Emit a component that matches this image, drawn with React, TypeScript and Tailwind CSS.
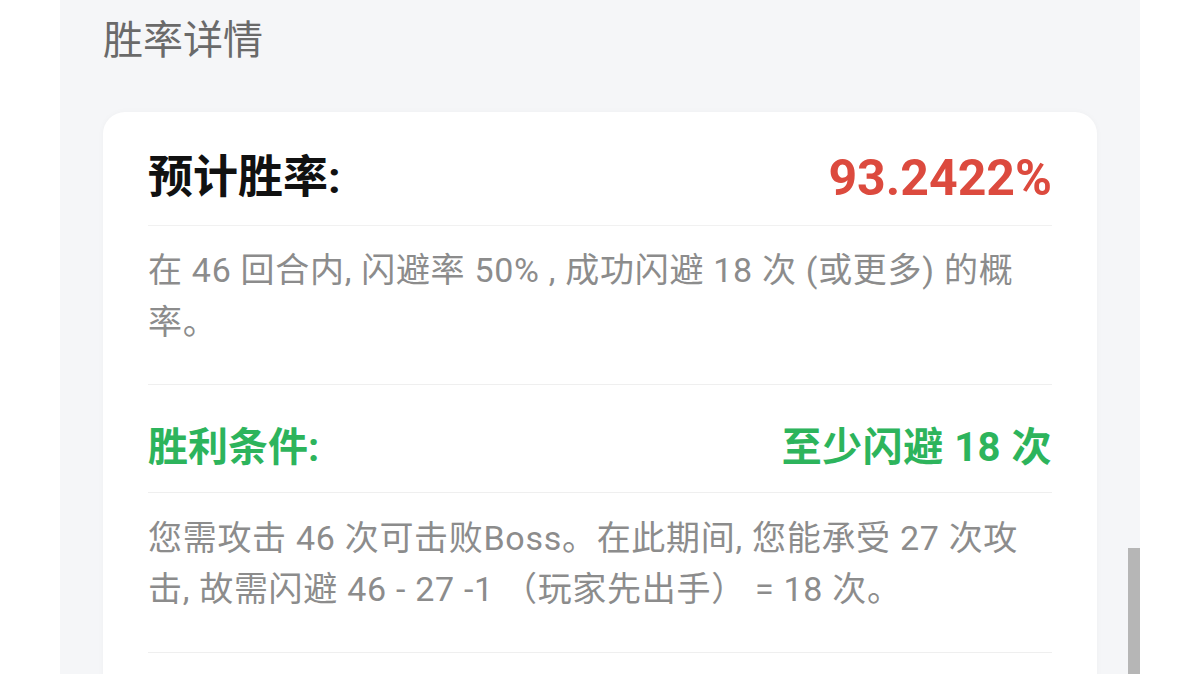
import React from "react";

const FONT = { fontFamily: "Roboto, 'Noto Sans CJK SC', sans-serif" };

export default function App() {
  return (
    <div className="w-[1200px] h-[674px] bg-white overflow-hidden relative" style={FONT}>
      <div className="ml-[60px] w-[1080px] h-full bg-[#f5f6f8] px-[43px] pt-[17px]">
        <h2 className="text-[40px] leading-[48px] text-[#6a6a6a] font-normal">胜率详情</h2>
        <div className="mt-[47px] bg-white rounded-[22px] shadow-[0_0_6px_rgba(0,0,0,0.03)] px-[45px] pt-[18px]">
          <div className="h-[96px] flex items-center justify-between border-b border-[#f1f1f1]">
            <span className="text-[45px] font-bold text-[#111111] leading-none">预计胜率:</span>
            <span className="text-[50px] font-bold text-[#dc4a3e] leading-none">93.2422%</span>
          </div>
          <p className="pt-[18px] pb-[36px] text-[34px] leading-[52px] tracking-[0.7px] text-[#8c8c8c] border-b border-[#efefef]">
            在 46 回合内, 闪避率 50% , 成功闪避 18 次 (或更多) 的概<br />率。
          </p>
          <div className="pt-[40px] pb-[21px] flex items-center justify-between border-b border-[#efefef]">
            <span className="text-[40px] font-bold leading-[46px] text-[#2db45c]">胜利条件:</span>
            <span className="text-[40px] font-bold leading-[46px] tracking-[0.5px] text-[#2db45c]">至少闪避 18 次</span>
          </div>
          <p className="pt-[20px] pb-[37px] text-[34px] leading-[51px] tracking-[0.7px] text-[#8c8c8c] border-b border-[#efefef]">
            您需攻击 46 次可击败Boss。在此期间, 您能承受 27 次攻<br />击, 故需闪避 46 - 27 -1 （玩家先出手） = 18 次。
          </p>
          <div className="h-[60px]" />
        </div>
      </div>
      <div className="absolute left-[1128px] top-[548px] w-[12px] h-[140px] bg-[#b6b6b6]" />
    </div>
  );
}
